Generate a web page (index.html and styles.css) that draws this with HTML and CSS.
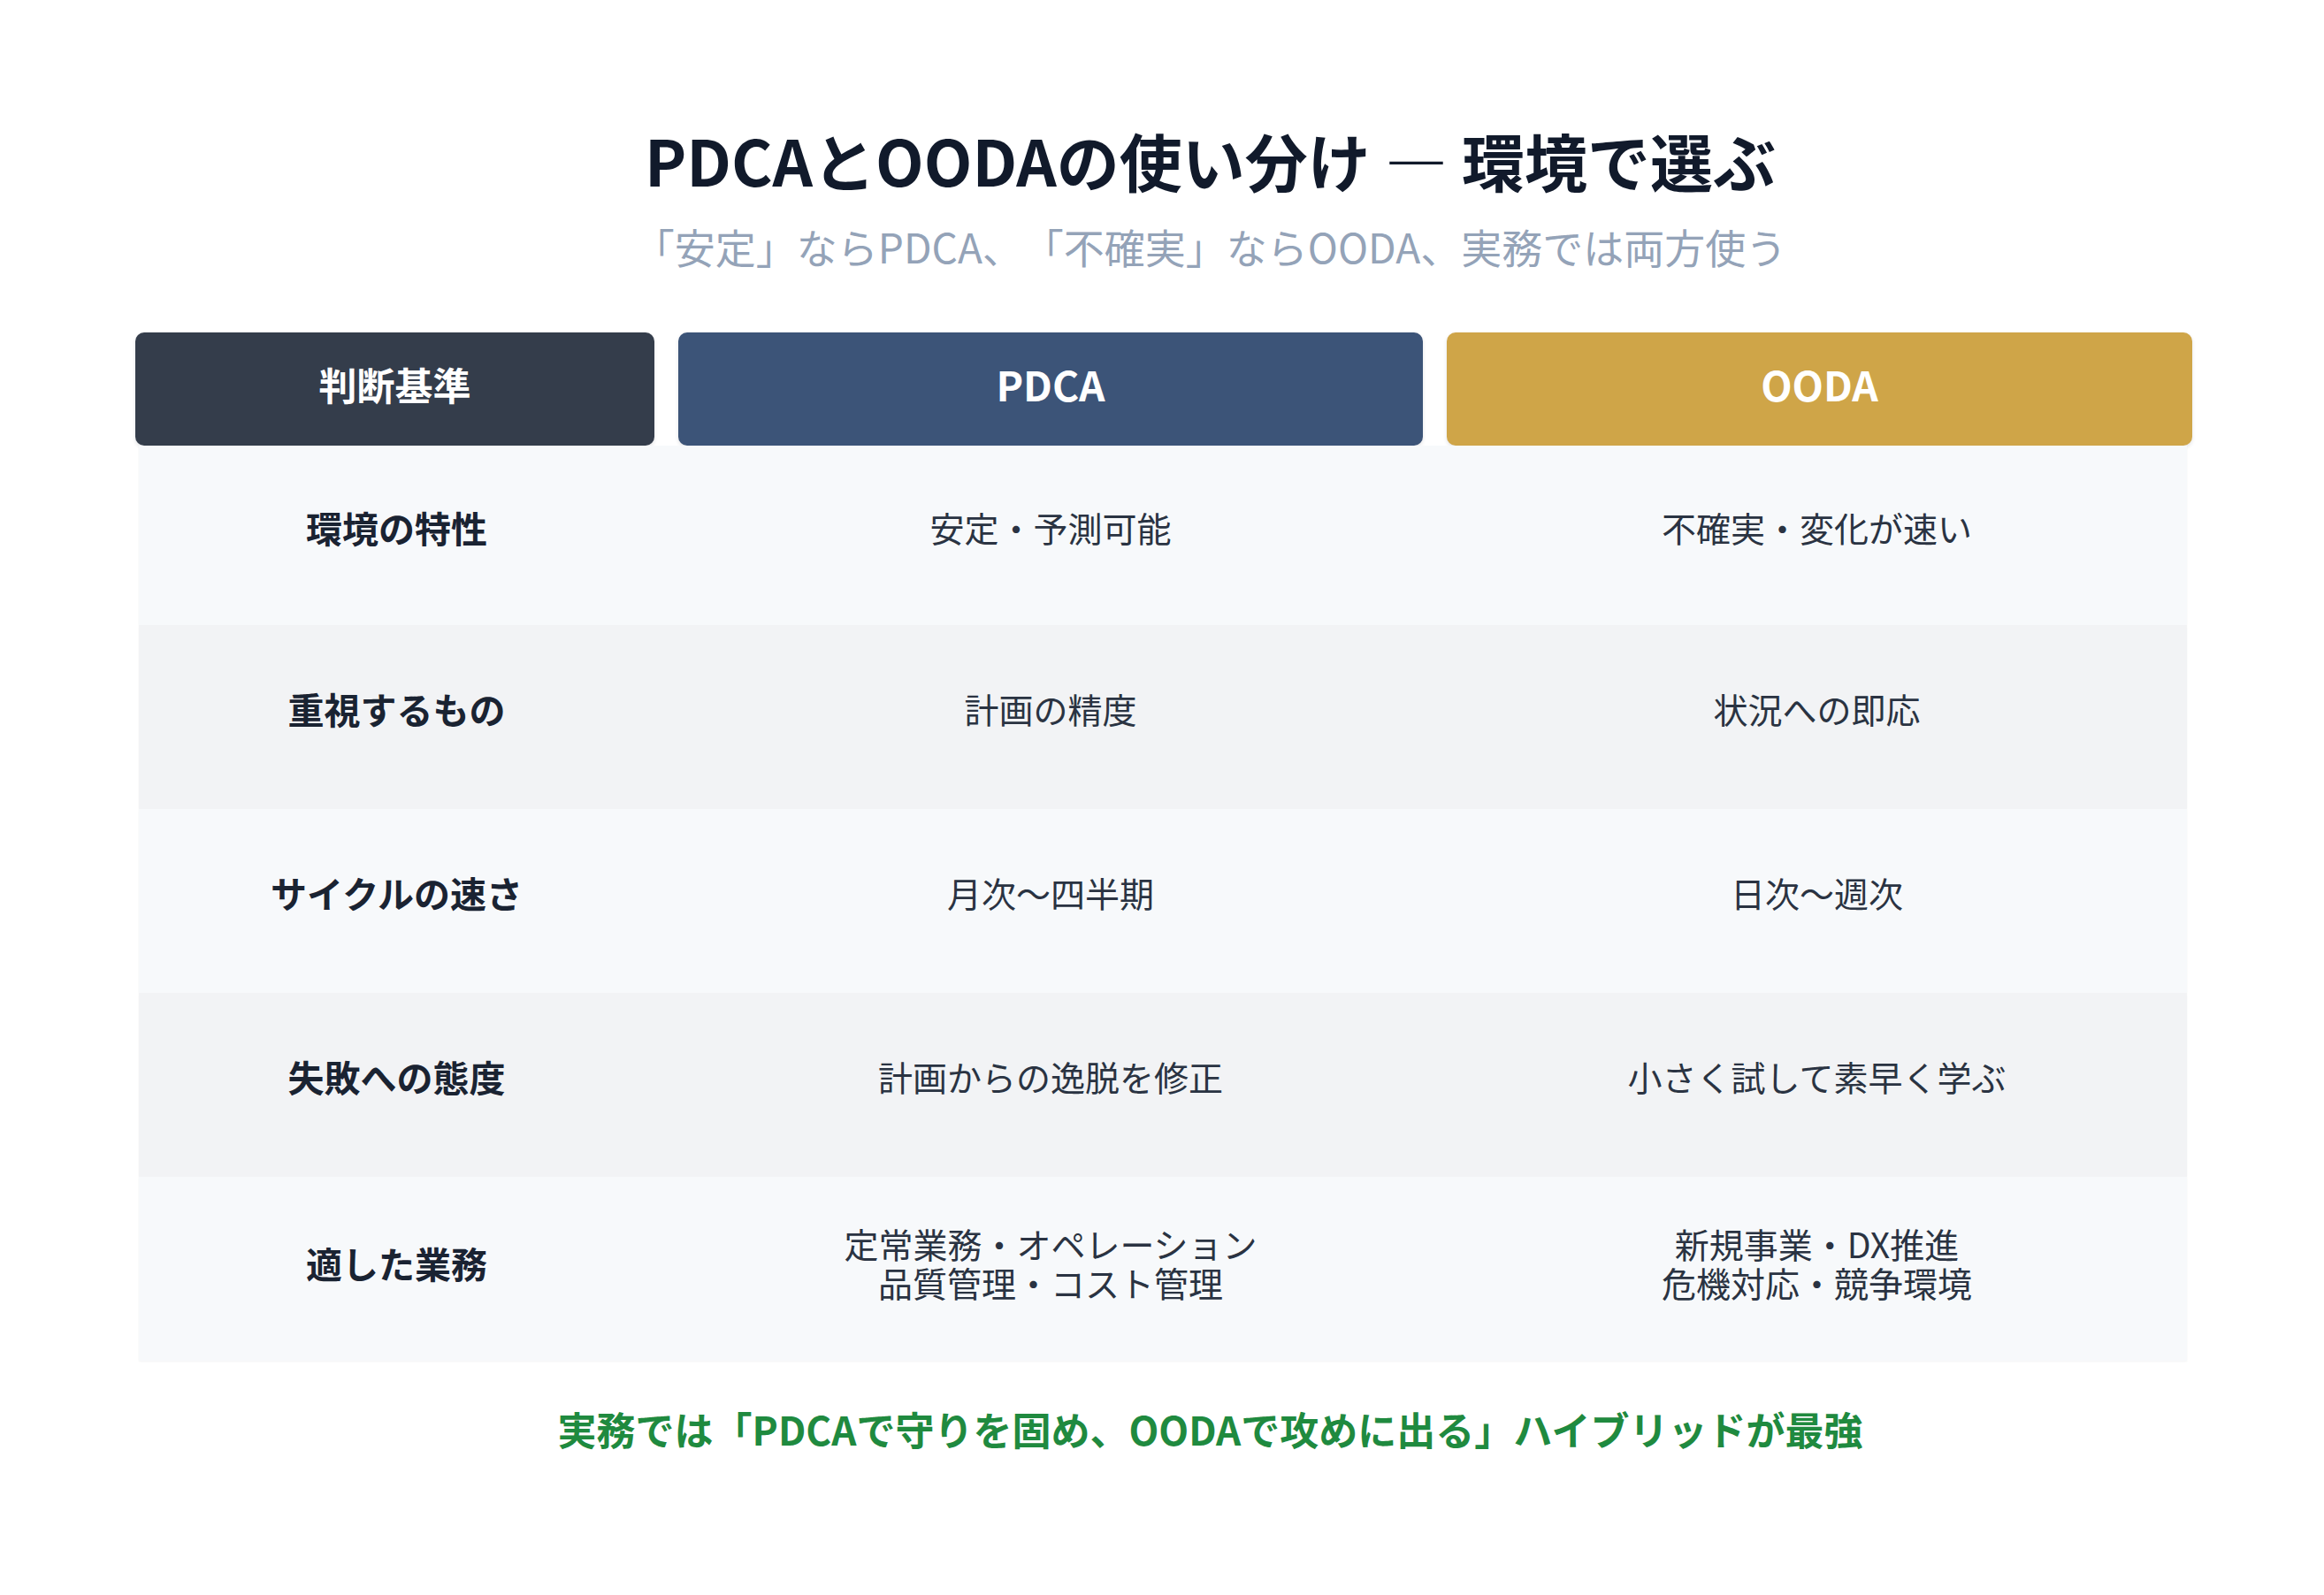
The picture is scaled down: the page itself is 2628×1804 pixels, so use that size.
FILE: index.html
```html
<!DOCTYPE html>
<html lang="ja">
<head>
<meta charset="utf-8">
<title>PDCAとOODAの使い分け</title>
<link rel="stylesheet" href="styles.css">
</head>
<body>
<main class="page">
  <h1 class="title caption">PDCAとOODAの使い分け — 環境で選ぶ</h1>
  <p class="subtitle caption">「安定」ならPDCA、「不確実」ならOODA、実務では両方使う</p>

  <section class="table">
    <div class="head">
      <div class="hcell h-criteria">判断基準</div>
      <div class="hcell h-pdca">PDCA</div>
      <div class="hcell h-ooda">OODA</div>
    </div>
    <div class="row odd first">
      <div class="label">環境の特性</div>
      <div class="value">安定・予測可能</div>
      <div class="value">不確実・変化が速い</div>
    </div>
    <div class="row even">
      <div class="label">重視するもの</div>
      <div class="value">計画の精度</div>
      <div class="value">状況への即応</div>
    </div>
    <div class="row odd">
      <div class="label">サイクルの速さ</div>
      <div class="value">月次〜四半期</div>
      <div class="value">日次〜週次</div>
    </div>
    <div class="row even">
      <div class="label">失敗への態度</div>
      <div class="value">計画からの逸脱を修正</div>
      <div class="value">小さく試して素早く学ぶ</div>
    </div>
    <div class="row odd last">
      <div class="label">適した業務</div>
      <div class="value multi"><span class="line">定常業務・オペレーション</span><span class="line">品質管理・コスト管理</span></div>
      <div class="value multi"><span class="line">新規事業・DX推進</span><span class="line">危機対応・競争環境</span></div>
    </div>
  </section>

  <p class="footer caption">実務では「PDCAで守りを固め、OODAで攻めに出る」ハイブリッドが最強</p>
</main>
</body>
</html>
```

FILE: styles.css
```css
html, body {
  margin: 0;
  padding: 0;
  background: #ffffff;
}

body {
  font-family: "Noto Sans CJK JP", "Noto Sans", sans-serif;
  color: #1e293b;
  text-spacing-trim: space-all;
}

.page {
  padding: 138px 148px 0 153px;
  display: flex;
  flex-direction: column;
}

.caption {
  padding-left: 104px;
  text-align: center;
}

.title {
  margin: 0;
  font-size: 71px;
  line-height: 84px;
  font-weight: 700;
  color: #111a2b;
}

.subtitle {
  margin: 26px 0 0;
  font-size: 46px;
  line-height: 60px;
  font-weight: 400;
  color: #94a3b8;
}

.table {
  margin-top: 68px;
  display: flex;
  flex-direction: column;
}

.head {
  display: grid;
  grid-template-columns: 587px 842px 843px;
  column-gap: 27px;
}

.hcell {
  box-sizing: border-box;
  height: 128px;
  padding-bottom: 12px;
  border-radius: 10px;
  display: flex;
  align-items: center;
  justify-content: center;
  color: #ffffff;
  font-size: 46px;
  font-weight: 700;
  box-shadow: 0 2px 4px rgba(15, 23, 42, 0.12);
}

.h-criteria { background: #343d4b; font-size: 43px; }
.h-pdca { background: #3c5478; }
.h-ooda { background: #cfa548; }

.row {
  box-sizing: border-box;
  margin: 0 7px 0 4px;
  height: 208px;
  padding-bottom: 20px;
  display: grid;
  grid-template-columns: 583px 842px 837px;
  column-gap: 27px;
  align-items: center;
  box-shadow: 0 1px 2px rgba(15, 23, 42, 0.05);
}

.row.first { height: 203px; }
.row.last { padding-bottom: 14px; }

.row.odd { background: #f7f9fb; }
.row.even { background: #f2f3f5; }

.label {
  text-align: center;
  font-size: 41px;
  line-height: 48px;
  font-weight: 700;
  color: #1a2332;
}

.value {
  text-align: center;
  font-size: 39px;
  line-height: 44px;
  font-weight: 400;
  color: #2a3342;
}

.value.multi {
  display: flex;
  flex-direction: column;
  align-items: center;
}

.line {
  display: block;
  height: 44px;
}

.footer {
  margin: 47px 0 0;
  font-size: 44px;
  line-height: 60px;
  font-weight: 700;
  color: #1f8a3f;
}
```
